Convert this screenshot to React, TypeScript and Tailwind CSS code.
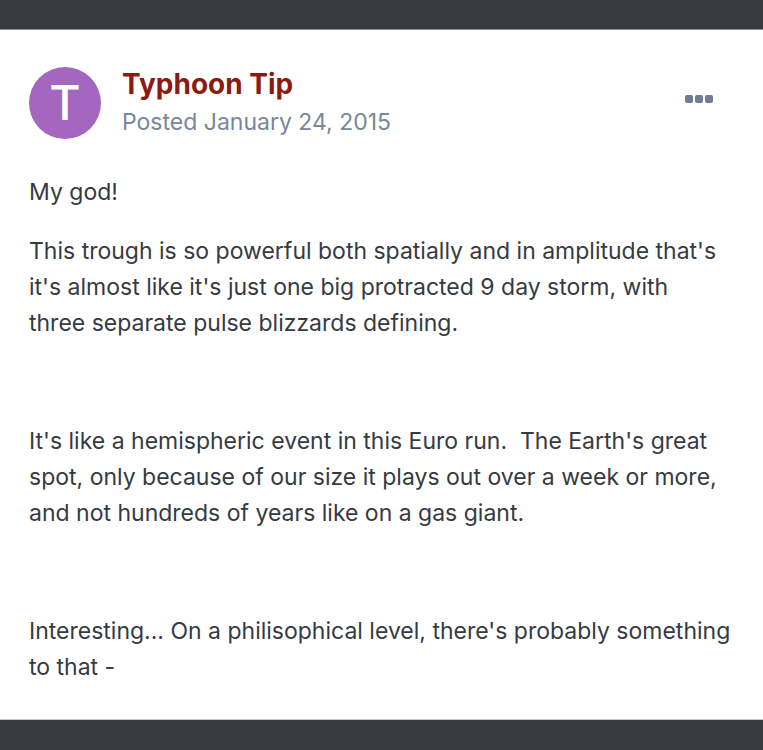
export default function App() {
  const font = { fontFamily: "Inter, 'Noto Sans', sans-serif" };
  return (
    <div className="flex h-[750px] w-[763px] flex-col bg-white" style={font}>
      <div className="h-[30px] shrink-0 border-b border-[#8a8d90] bg-[#383c40]" />
      <div className="flex-1 px-[29px] pt-[37px]">
        <div className="flex items-start">
          <div className="flex h-[72px] w-[72px] shrink-0 items-center justify-center rounded-full bg-[#a566c0] text-[48px] font-medium leading-none text-white">
            T
          </div>
          <div className="ml-[21px] flex-1">
            <div className="text-[28px] font-bold leading-[34px] text-[#8c1a10]">Typhoon Tip</div>
            <div className="mt-[6px] text-[23px] leading-[30px] text-[#7a869b]">Posted January 24, 2015</div>
          </div>
          <div className="mr-[21px] mt-[28px] flex gap-[2px]">
            <span className="h-[8px] w-[8px] rounded-[2px] bg-[#6f7c94]" />
            <span className="h-[8px] w-[8px] rounded-[2px] bg-[#6f7c94]" />
            <span className="h-[8px] w-[8px] rounded-[2px] bg-[#6f7c94]" />
          </div>
        </div>
        <div className="mt-[35px] text-[23px] leading-[36px] text-[#353b41]">
          <p className="mb-[23px]">My god!</p>
          <p className="mb-[23px]">
            This trough is so powerful both spatially and in amplitude that's it's almost like it's just one big
            protracted 9 day storm, with
            <br />
            three separate pulse blizzards defining.
          </p>
          <p className="mb-[23px]">&nbsp;</p>
          <p className="mb-[23px]">
            It's like a hemispheric event in this Euro run.&nbsp; The Earth's great spot, only because of our size it
            plays out over a week or more, and not hundreds of years like on a gas giant.
          </p>
          <p className="mb-[23px]">&nbsp;</p>
          <p>Interesting... On a philisophical level, there's probably something to that -</p>
        </div>
      </div>
      <div className="h-[31px] shrink-0 border-t border-[#c4c6c8] bg-[#383c40]" />
    </div>
  );
}
